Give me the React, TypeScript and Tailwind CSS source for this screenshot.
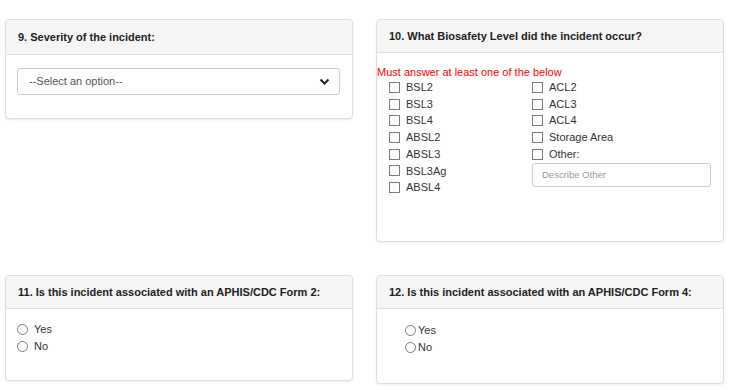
import React from 'react';

const Panel: React.FC<{ title: string; headClass: string; bodyClass: string; children: React.ReactNode }> = ({ title, headClass, bodyClass, children }) => (
  <div className="bg-white border border-[#dddddd] rounded-[4px] shadow-[0_1px_2px_rgba(0,0,0,0.08)] overflow-hidden">
    <div className={`bg-[#f5f5f5] border-b border-[#dddddd] px-3 flex items-center text-[11px] font-bold text-[#222] ${headClass}`}>
      {title}
    </div>
    <div className={bodyClass}>{children}</div>
  </div>
);

const Check = ({ label }: { label: string }) => (
  <label className="flex items-center gap-[6px] h-[16.7px] text-[11px] text-[#333]">
    <span className="w-[11px] h-[11px] border border-[#7a7a7a] bg-white" />
    {label}
  </label>
);

const Radio = ({ label, gap }: { label: string; gap: string }) => (
  <label className={`flex items-center h-[17px] text-[11px] text-[#333] ${gap}`}>
    <span className="w-[11px] h-[11px] rounded-full border border-[#7a7a7a] bg-white" />
    {label}
  </label>
);

export default function App() {
  const left = ['BSL2', 'BSL3', 'BSL4', 'ABSL2', 'ABSL3', 'BSL3Ag', 'ABSL4'];
  const right = ['ACL2', 'ACL3', 'ACL4', 'Storage Area', 'Other:'];

  return (
    <div className="w-[730px] h-[390px] bg-white pl-[5px] pr-[6px] pt-[19px] font-['Liberation_Sans',Arial,sans-serif] grid grid-cols-[348px_348px] gap-x-[23px] gap-y-[33px] items-start content-start">
      <Panel title="9. Severity of the incident:" headClass="h-[35px]" bodyClass="h-[63px] pt-[13px] pl-[11px] pr-[12px]">
        <div className="h-[27px] border border-[#cccccc] rounded-[3px] flex items-center justify-between pl-[11px] pr-[9px] text-[11px] text-[#555]">
          <span>--Select an option--</span>
          <svg width="11" height="8" viewBox="0 0 11 8" fill="none">
            <path d="M1.5 1.5 L5.5 5.5 L9.5 1.5" stroke="#222" strokeWidth="2" />
          </svg>
        </div>
      </Panel>

      <Panel title="10. What Biosafety Level did the incident occur?" headClass="h-[33px]" bodyClass="h-[188px] pt-[12px]">
        <div className="text-[11px] text-[#ff0000] leading-[14px]">Must answer at least one of the below</div>
        <div className="flex pl-[12px]">
          <div className="w-[143px] flex flex-col">
            {left.map((l) => (
              <Check key={l} label={l} />
            ))}
          </div>
          <div className="flex flex-col">
            {right.map((l) => (
              <Check key={l} label={l} />
            ))}
            <div className="mt-[1px] w-[179px] h-[24px] border border-[#cccccc] rounded-[3px] flex items-center pl-[9px] text-[9.5px] text-[#999]">
              Describe Other
            </div>
          </div>
        </div>
      </Panel>

      <Panel title="11. Is this incident associated with an APHIS/CDC Form 2:" headClass="h-[33px]" bodyClass="h-[71px] pt-[12px] pl-[11px]">
        <Radio label="Yes" gap="gap-[6px]" />
        <Radio label="No" gap="gap-[6px]" />
      </Panel>

      <Panel title="12. Is this incident associated with an APHIS/CDC Form 4:" headClass="h-[33px]" bodyClass="h-[74px] pt-[13px] pl-[28px]">
        <Radio label="Yes" gap="gap-[2px]" />
        <Radio label="No" gap="gap-[2px]" />
      </Panel>
    </div>
  );
}
